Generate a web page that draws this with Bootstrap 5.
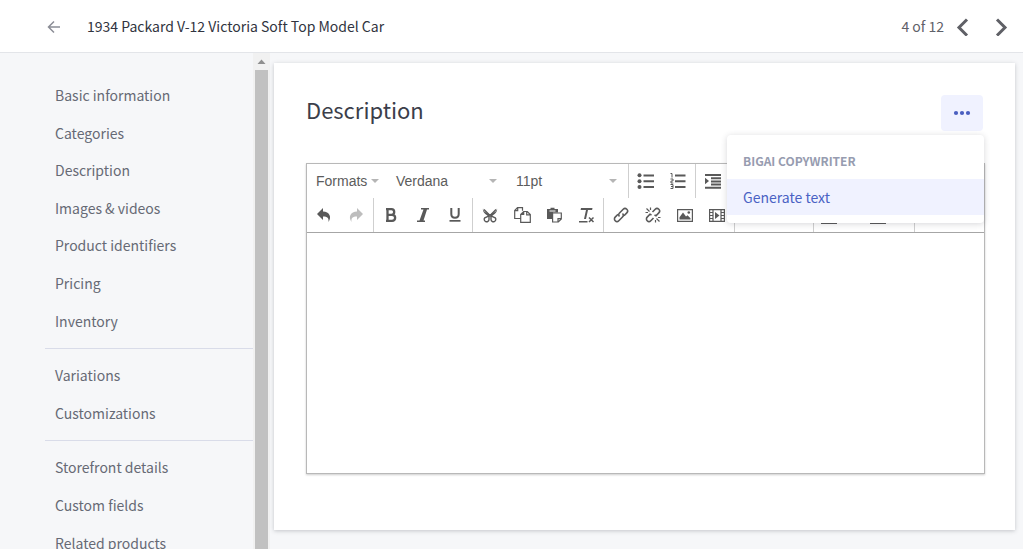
<!DOCTYPE html>
<html lang="en">
<head>
<meta charset="utf-8">
<meta name="viewport" content="width=device-width, initial-scale=1">
<title>Edit product</title>
<link href="https://cdn.jsdelivr.net/npm/bootstrap@5.3.0/dist/css/bootstrap.min.css" rel="stylesheet">
<style>
  body { font-family: "Noto Sans CJK SC", "Noto Sans", sans-serif; font-size: 14px; line-height: 20px; color: #313440; background: #f6f7f9; }
  .top-bar { height: 53px; padding: 0 15px 0 47px; border-bottom: 1px solid #e3e5e9; background: #fff; }
  .product-name { margin: 0 0 0 26px; font-size: 14px; line-height: 20px; font-weight: 400; color: #313440; }
  .icon-btn { padding: 0; border: 0; background: none; line-height: 0; color: #5f6066; }
  .pager { gap: 12px; color: #5f6169; }
  .pager-arrows { gap: 26px; }
  .side-nav { width: 253px; padding: 24px 0 0 45px; overflow: hidden; }
  .side-nav ul + ul { margin-top: 8px; padding-top: 8px; border-top: 1px solid #d9dce9; }
  .side-link { display: block; padding: 9px 10px; font-size: 14px; line-height: 1.4; color: #666a75; text-decoration: none; }
  .side-link:hover { color: #3c64f4; }
  .scroll-track { width: 17px; background: #f1f1f1; }
  .scroll-thumb { width: 13px; background: #c1c1c1; }
  .content-pane { padding: 10px 8px 18px 4px; }
  .panel { padding: 32px 30px 56px 32px; background: #fff; box-shadow: 0 1px 4px rgba(49,52,64,.25); }
  .panel-head { padding-right: 2px; }
  .panel h1 { font-size: 22px; line-height: 28px; font-weight: 400; color: #3b3e4a; }
  .more-btn { width: 42px; height: 36px; padding: 0; border: 0; border-radius: 4px; background: #f0f2ff; color: #4a5fc0; line-height: 0; }
  .action-menu { top: 100%; right: -1px; width: 257px; margin-top: 4px; padding: 8px 0; border: 0; border-radius: 4px; box-shadow: 0 1px 6px rgba(49,52,64,.2); background: #fff; }
  .action-menu .dropdown-header { padding: 8px 16px; font-size: 12px; line-height: 20px; font-weight: 700; color: #979cb0; }
  .action-menu .dropdown-item { padding: 8px 16px; font-size: 14px; line-height: 20px; color: #4a62c4; background: #f0f2ff; }
  .editor { margin-top: 32px; border: 1px solid #b8b8b8; box-shadow: 0 1px 2px rgba(0,0,0,.2); font-family: "Liberation Sans", Arial, sans-serif; }
  .tool-area { border-bottom: 1px solid #a6a6a6; overflow: hidden; }
  .tool-row { height: 34px; }
  .tool-group { padding: 0 1px; }
  .tool-group + .tool-group { border-left: 1px solid #cfcfcf; }
  .tool-btn { width: 32px; padding: 0; border: 0; background: none; color: #595959; line-height: 0; }
  .tool-btn svg { fill: currentColor; }
  .tool-btn:disabled { color: #bdbdbd; }
  .script-btn { width: 38px; }
  .split-btn { width: 49px; padding: 0 6px; }
  .pick-btn { width: 120px; padding: 0 11px 0 8px; border: 0; background: none; color: #5c5c5c; font-size: 14px; line-height: 20px; }
  .pick-short { width: 80px; padding-right: 9px; }
  .caret { width: 0; height: 0; border: 4px solid transparent; border-top-color: #b5b5b5; border-bottom: 0; }
  .edit-box { display: block; width: 100%; height: 240px; padding: 10px; border: 0; outline: 0; resize: none; font: 15px/20px Verdana, "DejaVu Sans", sans-serif; }
</style>
<script src="https://cdn.jsdelivr.net/npm/bootstrap@5.3.0/dist/js/bootstrap.bundle.min.js"></script>
</head>
<body class="d-flex flex-column vh-100 overflow-hidden">
<header class="top-bar d-flex align-items-center flex-shrink-0">
  <button class="icon-btn" type="button" aria-label="Back">
    <svg width="14" height="16" viewBox="0 0 14 16" fill="none" stroke="#8b8d96" stroke-width="1.5"><path d="M13 9H2M7 3.500 1.500 9 7 14.500"/></svg>
  </button>
  <h2 class="product-name">1934 Packard V-12 Victoria Soft Top Model Car</h2>
  <div class="pager d-flex align-items-center ms-auto">
    <span>4 of 12</span>
    <div class="pager-arrows d-flex">
      <button class="icon-btn" type="button" aria-label="Previous"><svg width="13" height="20" viewBox="0 0 13 20" fill="none" stroke="currentColor" stroke-width="3"><path d="M11 3.500 3 11.500l8 8"/></svg></button>
      <button class="icon-btn" type="button" aria-label="Next"><svg width="13" height="20" viewBox="0 0 13 20" fill="none" stroke="currentColor" stroke-width="3"><path d="M2 3.500 10 11.500l-8 8"/></svg></button>
    </div>
  </div>
</header>
<div class="d-flex flex-grow-1 overflow-hidden">
  <nav class="side-nav flex-shrink-0" aria-label="Product sections">
    <ul class="list-unstyled mb-0">
      <li><a class="side-link" href="#">Basic information</a></li>
      <li><a class="side-link" href="#">Categories</a></li>
      <li><a class="side-link" href="#">Description</a></li>
      <li><a class="side-link" href="#">Images &amp; videos</a></li>
      <li><a class="side-link" href="#">Product identifiers</a></li>
      <li><a class="side-link" href="#">Pricing</a></li>
      <li><a class="side-link" href="#">Inventory</a></li>
    </ul>
    <ul class="list-unstyled mb-0">
      <li><a class="side-link" href="#">Variations</a></li>
      <li><a class="side-link" href="#">Customizations</a></li>
    </ul>
    <ul class="list-unstyled mb-0">
      <li><a class="side-link" href="#">Storefront details</a></li>
      <li><a class="side-link" href="#">Custom fields</a></li>
      <li><a class="side-link" href="#">Related products</a></li>
    </ul>
  </nav>
  <div class="scroll-track d-flex flex-column align-items-center flex-shrink-0" aria-hidden="true">
    <svg class="flex-shrink-0" width="17" height="17" viewBox="0 0 17 17"><path d="M4.500 11h8L8.500 6.500z" fill="#8f8f8f"/></svg>
    <div class="scroll-thumb flex-grow-1"></div>
  </div>
  <main class="content-pane flex-grow-1">
    <section class="panel">
      <div class="panel-head d-flex justify-content-between align-items-start">
        <h1 class="m-0 pt-0">Description</h1>
        <div class="dropdown">
          <button class="more-btn d-block" type="button" aria-expanded="true" aria-label="More actions"><svg width="18" height="6" viewBox="0 0 18 6" fill="currentColor"><circle cx="3" cy="3" r="2.100"/><circle cx="9" cy="3" r="2.100"/><circle cx="15" cy="3" r="2.100"/></svg></button>
          <ul class="action-menu dropdown-menu show">
            <li><h6 class="dropdown-header">BIGAI COPYWRITER</h6></li>
            <li><button class="dropdown-item" type="button">Generate text</button></li>
          </ul>
        </div>
      </div>
      <div class="editor">
        <div class="tool-area">
          <div class="tool-row d-flex">
            <div class="tool-group d-flex pe-0">
              <button class="pick-btn pick-short d-flex align-items-center justify-content-between" type="button">Formats<span class="caret"></span></button>
              <button class="pick-btn d-flex align-items-center justify-content-between" type="button">Verdana<span class="caret"></span></button>
              <button class="pick-btn d-flex align-items-center justify-content-between" type="button">11pt<span class="caret"></span></button>
            </div>
            <div class="tool-group d-flex">
              <button class="tool-btn" type="button" aria-label="Bullet list"><svg width="18" height="16" viewBox="0 0 18 16"><circle cx="2.500" cy="2.300" r="2"/><circle cx="2.500" cy="8.200" r="2"/><circle cx="2.500" cy="14" r="2"/><path d="M6.500 1.500H17v2H6.500zM6.500 7.200H17v2H6.500zM6.500 13H17v2H6.500z"/></svg></button>
              <button class="tool-btn" type="button" aria-label="Numbered list"><svg width="18" height="16" viewBox="0 0 18 16"><path d="M6 1.500h10.500v2H6zM6 7.200h10.500v2H6zM6 13h10.500v2H6z"/><path d="M1.500.5H3v4M1.500 6H4v2H2v2h2.300M1.500 11.500H4v4H1.500M2 13.500h2" fill="none" stroke="currentColor"/></svg></button>
            </div>
            <div class="tool-group d-flex">
              <button class="tool-btn" type="button" aria-label="Increase indent"><svg width="18" height="16" viewBox="0 0 18 16"><path d="M1 1h16v2H1zM7 4.200h10v2H7zM7 7.400h10v2H7zM7 10.600h10v2H7zM1 13.800h16v2H1zM1 4.700v6.500l4-3.200z"/></svg></button>
              <button class="tool-btn" type="button" aria-label="Decrease indent"><svg width="18" height="16" viewBox="0 0 18 16"><path d="M1 1h16v2H1zM7 4.200h10v2H7zM7 7.400h10v2H7zM7 10.600h10v2H7zM1 13.800h16v2H1zM5 4.700v6.500L1 8z"/></svg></button>
            </div>
          </div>
          <div class="tool-row d-flex">
            <div class="tool-group d-flex">
              <button class="tool-btn" type="button" aria-label="Undo"><svg width="16" height="16" viewBox="0 0 16 16"><path d="M7 1v3.500c6.500 0 9 5.500 5.500 10.500.5-4-1-5.500-5.500-5.500V13L1 7z"/></svg></button>
              <button class="tool-btn" type="button" aria-label="Redo" disabled><svg width="16" height="16" viewBox="0 0 16 16"><path d="M9 1v3.500C2.500 4.500 0 10 3.500 15c-.5-4 1-5.500 5.500-5.500V13l6-6z"/></svg></button>
            </div>
            <div class="tool-group d-flex">
              <button class="tool-btn" type="button" aria-label="Bold"><svg width="16" height="16" viewBox="0 0 16 16"><path d="M3 2.200h5.500M4 7.800h5M3 13.800h6M4.500 1.200v13.600M8.500 2.200c3.600 0 3.600 5.600 0 5.600M9 7.800c4.200 0 4.200 6 0 6" fill="none" stroke="currentColor" stroke-width="2.300"/></svg></button>
              <button class="tool-btn" type="button" aria-label="Italic"><svg width="16" height="16" viewBox="0 0 16 16"><path d="M6 1h8v1.500h-2L8.500 13.500H10V15H2v-1.500h2.500L8.500 2.500H6z"/></svg></button>
              <button class="tool-btn" type="button" aria-label="Underline"><svg width="16" height="16" viewBox="0 0 16 16"><path d="M4.300 1v6c0 5 7.400 5 7.400 0V1" fill="none" stroke="currentColor" stroke-width="2"/><path d="M2.500 13h11v1.700h-11z"/></svg></button>
            </div>
            <div class="tool-group d-flex">
              <button class="tool-btn" type="button" aria-label="Cut"><svg width="16" height="16" viewBox="0 0 16 16"><path d="M1 1.300c0 2.500 2 4.200 6 5.600L9 9l-2.300.5C3.500 7.500.2 5 1 1.300zM15 1.300c0 2.500-2 4.200-6 5.600L7 9l2.300.5C12.500 7.500 15.800 5 15 1.300z"/><path d="M2 2.500 9.500 10M14 2.500 6.500 10M7 9v3.500a2.400 2.400 0 1 1-4.200-1.700L7 8.800M9 9v3.500a2.400 2.400 0 1 0 4.200-1.700L9 8.800" fill="none" stroke="currentColor" stroke-width="1.400"/></svg></button>
              <button class="tool-btn" type="button" aria-label="Copy"><svg width="17" height="16" viewBox="0 0 17 16"><path d="M6.500 11.500H.7V3.500L3.500.7h5v3M3.700.7v3H.7M6.700 7.500l3-3h3.600l3 3v7.800H6.700zM9.700 4.500v3h-3M12.700 4.500v3.300h3.500" fill="none" stroke="currentColor" stroke-width="1.200"/></svg></button>
              <button class="tool-btn" type="button" aria-label="Paste"><svg width="16" height="16" viewBox="0 0 16 16"><path d="M1 2h3.500V.8h4V2H12v3.500H7L6 12H1z"/><path d="M3.500 4h6" stroke="#fff"/><path d="M6.600 6h8.700v6l-3 3H6.600zM15 11.700h-3V15" fill="#fff" stroke="currentColor" stroke-width="1.200"/></svg></button>
              <button class="tool-btn" type="button" aria-label="Clear formatting"><svg width="17" height="16" viewBox="0 0 17 16"><path d="M3 1h11.500l-.4 1.900H10L8 12H6l2-9.100H2.600zM1 14h8.500v1.500H1z"/><path d="m11 10.500 4.500 4.500m0-4.500L11 15" stroke="currentColor" stroke-width="1.500"/></svg></button>
            </div>
            <div class="tool-group d-flex">
              <button class="tool-btn" type="button" aria-label="Insert link"><svg width="16" height="16" viewBox="0 0 16 16"><path d="M6.500 9.500c-1-1-1-2.500 0-3.500l3.700-3.700a2.500 2.500 0 0 1 3.600 3.600L11 8.700M9.500 6.500c1 1 1 2.500 0 3.500l-3.700 3.700a2.500 2.500 0 0 1-3.600-3.600L5 7.300" fill="none" stroke="currentColor" stroke-width="1.600"/></svg></button>
              <button class="tool-btn" type="button" aria-label="Remove link"><svg width="16" height="16" viewBox="0 0 16 16"><path d="m7.500 5 2.700-2.700a2.500 2.500 0 0 1 3.600 3.600L11 8.700 9.500 8M8.500 11l-2.700 2.700a2.500 2.500 0 0 1-3.600-3.600L5 7.300l1.500.7" fill="none" stroke="currentColor" stroke-width="1.600"/><path d="m1.500 1.500 3 3M5.500.5V3M.5 5.500H3M11.500 11.500l3 3M10.500 13v2.500M13 10.500h2.500" stroke="currentColor" stroke-width="1.200"/></svg></button>
              <button class="tool-btn" type="button" aria-label="Insert image"><svg width="16" height="16" viewBox="0 0 16 16"><path d="M.6 2.600h14.800v11.800H.6z" fill="none" stroke="currentColor" stroke-width="1.200"/><path d="M2.500 12.500v-2.200L6 5.500l3 4 1.500-1.200 3 3v1.200z"/><circle cx="11.800" cy="5.500" r="1.300"/></svg></button>
              <button class="tool-btn" type="button" aria-label="Insert video"><svg width="16" height="16" viewBox="0 0 16 16"><path d="M.6 2.600h14.800v11.800H.6zM4 2.500v12M12 2.500v12M1 5.500h3M1 8.500h3M1 11.500h3M12 5.500h3M12 8.500h3M12 11.500h3" fill="none" stroke="currentColor" stroke-width="1.200"/><path d="M6 5v7l4.500-3.500z"/></svg></button>
            </div>
            <div class="tool-group d-flex">
              <button class="tool-btn script-btn" type="button" aria-label="Subscript"></button>
              <button class="tool-btn script-btn" type="button" aria-label="Superscript"></button>
            </div>
            <div class="tool-group d-flex">
              <button class="tool-btn split-btn d-flex align-items-center justify-content-between" type="button" aria-label="Text color"><svg width="16" height="18" viewBox="0 0 16 18"><path d="M0 15h16v3H0z"/></svg><span class="caret"></span></button>
              <button class="tool-btn split-btn d-flex align-items-center justify-content-between" type="button" aria-label="Background color"><svg width="16" height="18" viewBox="0 0 16 18"><path d="M0 15h16v3H0z"/></svg><span class="caret"></span></button>
            </div>
            <div class="tool-group d-flex">
              <button class="tool-btn" type="button" aria-label="Table"></button>
            </div>
          </div>
        </div>
        <textarea class="edit-box" aria-label="Description"></textarea>
      </div>
    </section>
  </main>
</div>
</body>
</html>
